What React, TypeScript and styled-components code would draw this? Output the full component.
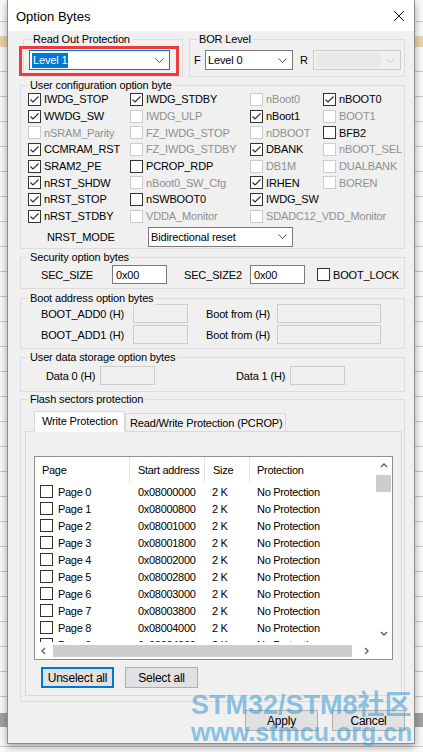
import React from 'react';
import styled, { createGlobalStyle } from 'styled-components';

type OptState = 'on' | 'off' | 'na';
type Opt = { label: string; state: OptState; span?: number };

const CONFIG_OPTIONS: (Opt | null)[] = [
  { label: 'IWDG_STOP', state: 'on' },
  { label: 'IWDG_STDBY', state: 'on' },
  { label: 'nBoot0', state: 'na' },
  { label: 'nBOOT0', state: 'on' },
  { label: 'WWDG_SW', state: 'on' },
  { label: 'IWDG_ULP', state: 'na' },
  { label: 'nBoot1', state: 'on' },
  { label: 'BOOT1', state: 'na' },
  { label: 'nSRAM_Parity', state: 'na' },
  { label: 'FZ_IWDG_STOP', state: 'na' },
  { label: 'nDBOOT', state: 'na' },
  { label: 'BFB2', state: 'off' },
  { label: 'CCMRAM_RST', state: 'on' },
  { label: 'FZ_IWDG_STDBY', state: 'na' },
  { label: 'DBANK', state: 'on' },
  { label: 'nBOOT_SEL', state: 'na' },
  { label: 'SRAM2_PE', state: 'on' },
  { label: 'PCROP_RDP', state: 'off' },
  { label: 'DB1M', state: 'na' },
  { label: 'DUALBANK', state: 'na' },
  { label: 'nRST_SHDW', state: 'on' },
  { label: 'nBoot0_SW_Cfg', state: 'na' },
  { label: 'IRHEN', state: 'on' },
  { label: 'BOREN', state: 'na' },
  { label: 'nRST_STOP', state: 'on' },
  { label: 'nSWBOOT0', state: 'off' },
  { label: 'IWDG_SW', state: 'on' },
  null,
  { label: 'nRST_STDBY', state: 'on' },
  { label: 'VDDA_Monitor', state: 'na' },
  { label: 'SDADC12_VDD_Monitor', state: 'na', span: 2 },
];

const PAGES = Array.from({ length: 10 }, (_, i) => ({
  name: `Page ${i}`,
  addr: '0x' + (0x08000000 + i * 0x800).toString(16).toUpperCase().padStart(8, '0'),
}));

function CheckBox({ state }: { state: OptState }) {
  return (
    <Box $na={state === 'na'}>
      {state === 'on' && (
        <svg width="11" height="11" viewBox="0 0 11 11">
          <polyline points="1.5,5.5 4,8 9.5,2.5" fill="none" stroke="#2b2b2b" strokeWidth="1.1" />
        </svg>
      )}
    </Box>
  );
}

function Chevron({ color = '#555' }: { color?: string }) {
  return (
    <svg width="9" height="5" viewBox="0 0 9 5">
      <polyline points="0.5,0.5 4.5,4.5 8.5,0.5" fill="none" stroke={color} strokeWidth="1" />
    </svg>
  );
}

function Arrow({ dir }: { dir: 'up' | 'down' | 'left' | 'right' }) {
  const pts = {
    up: '1,5 4,2 7,5',
    down: '1,2 4,5 7,2',
    left: '5,1 2,4 5,7',
    right: '2,1 5,4 2,7',
  }[dir];
  return (
    <svg width="8" height="8" viewBox="0 0 8 8">
      <polyline points={pts} fill="none" stroke="#606060" strokeWidth="1.4" />
    </svg>
  );
}

export default function App() {
  return (
    <Screen>
      <GlobalStyle />
      <Dialog>
        <TitleBar>
          <Title>Option Bytes</Title>
          <svg width="12" height="12" viewBox="0 0 12 12">
            <path d="M1 1 L11 11 M11 1 L1 11" stroke="#111" strokeWidth="1" />
          </svg>
        </TitleBar>

        <Body>
          <TopRow>
            <Group $h={38} $w={160} $ml={3}>
              <Caption>Read Out Protection</Caption>
              <GroupRow $pt={10} $pl={5}>
                <Combo $w={141} $focus>
                  <Picked>Level 1</Picked>
                  <Chevron />
                </Combo>
              </GroupRow>
              <Highlight />
            </Group>
            <Group $h={38} $w={216}>
              <Caption>BOR Level</Caption>
              <GroupRow $pt={10} $pl={4}>
                <Label $w={11}>F</Label>
                <Combo $w={88}>
                  <span>Level 0</span>
                  <Chevron />
                </Combo>
                <Label $w={13} $ml={7}>R</Label>
                <Combo $w={88} $disabled>
                  <DisabledWell />
                  <Chevron color="#c4c4c4" />
                </Combo>
              </GroupRow>
            </Group>
          </TopRow>

          <Group $h={164} $mt={8}>
            <Caption>User configuration option byte</Caption>
            <OptionGrid>
              {CONFIG_OPTIONS.map((opt, i) =>
                opt ? (
                  <OptionItem key={i} $na={opt.state === 'na'} $span={opt.span ?? 1}>
                    <CheckBox state={opt.state} />
                    {opt.label}
                  </OptionItem>
                ) : (
                  <span key={i} />
                ),
              )}
            </OptionGrid>
            <GroupRow $pt={2} $pl={26}>
              <Label $w={101}>NRST_MODE</Label>
              <Combo $w={145}>
                <span>Bidirectional reset</span>
                <Chevron />
              </Combo>
            </GroupRow>
          </Group>

          <Group $h={32} $mt={8}>
            <Caption>Security option bytes</Caption>
            <GroupRow $pt={7} $pl={20}>
              <Label $w={71}>SEC_SIZE</Label>
              <TextBox $w={55}>0x00</TextBox>
              <Label $w={66} $ml={17}>SEC_SIZE2</Label>
              <TextBox $w={55}>0x00</TextBox>
              <OptionItem $na={false} $span={1} $ml={12}>
                <CheckBox state="off" />
                BOOT_LOCK
              </OptionItem>
            </GroupRow>
          </Group>

          <Group $h={51} $mt={9}>
            <Caption>Boot address option bytes</Caption>
            <GroupRow $pt={5} $pl={20}>
              <Label $w={92}>BOOT_ADD0 (H)</Label>
              <TextBox $w={55} $disabled />
              <Label $w={71} $ml={18}>Boot from (H)</Label>
              <TextBox $w={104} $disabled />
            </GroupRow>
            <GroupRow $pt={2} $pl={20}>
              <Label $w={92}>BOOT_ADD1 (H)</Label>
              <TextBox $w={55} $disabled />
              <Label $w={71} $ml={18}>Boot from (H)</Label>
              <TextBox $w={104} $disabled />
            </GroupRow>
          </Group>

          <Group $h={35} $mt={8}>
            <Caption>User data storage option bytes</Caption>
            <GroupRow $pt={8} $pl={25}>
              <Label $w={54}>Data 0 (H)</Label>
              <TextBox $w={55} $disabled />
              <Label $w={54} $ml={81}>Data 1 (H)</Label>
              <TextBox $w={55} $disabled />
            </GroupRow>
          </Group>

          <Group $h={303} $mt={7}>
            <Caption>Flash sectors protection</Caption>
            <FlashInner>
              <TabStrip>
                <Tab $active>Write Protection</Tab>
                <Tab>Read/Write Protection (PCROP)</Tab>
              </TabStrip>
              <TabPanel>
                <ListFrame>
                  <ListBody>
                    <HeaderRow>
                      <HeaderCell $pl={7}>Page</HeaderCell>
                      <HeaderCell $pl={8}>Start address</HeaderCell>
                      <HeaderCell $pl={8}>Size</HeaderCell>
                      <HeaderCell $pl={7} $last>Protection</HeaderCell>
                    </HeaderRow>
                    {PAGES.map((p) => (
                      <PageRow key={p.name}>
                        <PageCell>
                          <CheckBox state="off" />
                          {p.name}
                        </PageCell>
                        <Cell $pl={8}>{p.addr}</Cell>
                        <Cell $pl={7}>2 K</Cell>
                        <Cell $pl={7}>No Protection</Cell>
                      </PageRow>
                    ))}
                  </ListBody>
                  <VScroll>
                    <ArrowCell><Arrow dir="up" /></ArrowCell>
                    <VThumb />
                    <Spacer />
                    <ArrowCell><Arrow dir="down" /></ArrowCell>
                  </VScroll>
                  <HScroll>
                    <ArrowCell><Arrow dir="left" /></ArrowCell>
                    <HThumb />
                    <Spacer />
                    <ArrowCell><Arrow dir="right" /></ArrowCell>
                  </HScroll>
                  <span />
                </ListFrame>
                <ButtonRow>
                  <WinButton $focus>Unselect all</WinButton>
                  <WinButton>Select all</WinButton>
                </ButtonRow>
              </TabPanel>
            </FlashInner>
          </Group>

          <Footer>
            <WinButton>Apply</WinButton>
            <WinButton>Cancel</WinButton>
          </Footer>
        </Body>
      </Dialog>

      <Watermark>
        <div>STM32/STM8社区</div>
        <WatermarkUrl>www.stmcu.org.cn</WatermarkUrl>
      </Watermark>
    </Screen>
  );
}

const GlobalStyle = createGlobalStyle`
  body {
    margin: 0;
    font-family: "Liberation Sans", Arial, sans-serif;
  }
`;

// spreadsheet grid showing behind the modal
const Screen = styled.div`
  position: relative;
  width: 423px;
  height: 752px;
  overflow: hidden;
  background-color: #fafafa;
  background-image:
    linear-gradient(#e7d4ad, #e7d4ad),
    linear-gradient(#a3a3a3, #a3a3a3),
    repeating-linear-gradient(to bottom, transparent 0 24px, #c9c9c9 24px 25px);
  background-size: 100% 11px, 100% 14px, 100% 100%;
  background-position: 0 36px, 0 713px, 0 -3px;
  background-repeat: no-repeat, no-repeat, repeat;
`;

const Dialog = styled.div`
  box-sizing: border-box;
  margin-left: 7px;
  width: 408px;
  height: 744px;
  border: 1px solid #8c8c8c;
  border-top: none;
  background: #f0f0f0;
  box-shadow: 0 3px 8px rgba(0, 0, 0, 0.35);
  display: flex;
  flex-direction: column;
  font-size: 11px;
  letter-spacing: -0.15px;
  color: #000;
`;

const TitleBar = styled.div`
  height: 31px;
  flex-shrink: 0;
  background: #fff;
  display: flex;
  align-items: center;
  justify-content: space-between;
  padding: 0 9px 0 8px;
`;

const Title = styled.span`
  font-size: 13px;
  letter-spacing: 0;
  margin-top: 1px;
`;

const Body = styled.div`
  display: flex;
  flex-direction: column;
  padding: 8px 9px 0 12px;
`;

const TopRow = styled.div`
  display: flex;
  gap: 6px;
`;

const Group = styled.div<{ $h: number; $w?: number; $ml?: number; $mt?: number }>`
  position: relative;
  box-sizing: border-box;
  height: ${(p) => p.$h}px;
  width: ${(p) => (p.$w ? `${p.$w}px` : 'auto')};
  margin-left: ${(p) => p.$ml ?? 0}px;
  margin-top: ${(p) => p.$mt ?? 0}px;
  border: 1px solid #dcdcdc;
`;

const Caption = styled.span`
  position: absolute;
  top: -7px;
  left: 7px;
  padding: 0 2px;
  line-height: 13px;
  background: #f0f0f0;
`;

const Highlight = styled.div`
  position: absolute;
  left: -5px;
  top: 6px;
  width: 160px;
  height: 30px;
  box-sizing: border-box;
  border: 3px solid #ec3b3f;
`;

const GroupRow = styled.div<{ $pt: number; $pl: number }>`
  display: flex;
  align-items: center;
  padding-top: ${(p) => p.$pt}px;
  padding-left: ${(p) => p.$pl}px;
`;

const Label = styled.span<{ $w: number; $ml?: number }>`
  flex-shrink: 0;
  width: ${(p) => p.$w}px;
  margin-left: ${(p) => p.$ml ?? 0}px;
  white-space: nowrap;
`;

const Combo = styled.div<{ $w: number; $focus?: boolean; $disabled?: boolean }>`
  box-sizing: border-box;
  flex-shrink: 0;
  width: ${(p) => p.$w}px;
  height: 20px;
  display: flex;
  align-items: center;
  justify-content: space-between;
  padding: 0 5px 0 2px;
  background: ${(p) => (p.$disabled ? '#f0f0f0' : '#fff')};
  border: 1px solid ${(p) => (p.$focus ? '#0078d7' : p.$disabled ? '#cccccc' : '#7a7a7a')};
`;

const Picked = styled.span`
  background: #0078d7;
  color: #fff;
  padding: 1px 1px;
  line-height: 13px;
`;

const DisabledWell = styled.div`
  width: 66px;
  height: 14px;
  background: #e9e9e9;
`;

const Box = styled.span<{ $na: boolean }>`
  box-sizing: border-box;
  flex-shrink: 0;
  width: 13px;
  height: 13px;
  display: flex;
  align-items: center;
  justify-content: center;
  background: #fff;
  border: 1px solid ${(p) => (p.$na ? '#cccccc' : '#333')};
`;

const OptionGrid = styled.div`
  display: grid;
  grid-template-columns: 102px 120px 73px 1fr;
  grid-auto-rows: 16.7px;
  padding: 5px 0 0 7px;
`;

const OptionItem = styled.label<{ $na: boolean; $span: number; $ml?: number }>`
  display: flex;
  align-items: center;
  gap: 3px;
  margin-left: ${(p) => p.$ml ?? 0}px;
  white-space: nowrap;
  grid-column: span ${(p) => p.$span};
  color: ${(p) => (p.$na ? '#8f8f8f' : '#000')};
`;

const TextBox = styled.div<{ $w: number; $disabled?: boolean }>`
  box-sizing: border-box;
  flex-shrink: 0;
  width: ${(p) => p.$w}px;
  height: 19px;
  display: flex;
  align-items: center;
  padding-left: 3px;
  background: ${(p) => (p.$disabled ? '#f0f0f0' : '#fff')};
  border: 1px solid ${(p) => (p.$disabled ? '#cccccc' : '#7a7a7a')};
`;

const FlashInner = styled.div`
  padding: 11px 2px 0 4px;
`;

const TabStrip = styled.div`
  position: relative;
  z-index: 1;
  display: flex;
  align-items: flex-end;
  height: 21px;
  margin-bottom: -1px;
  padding-left: 9px;
`;

const Tab = styled.div<{ $active?: boolean }>`
  box-sizing: border-box;
  height: ${(p) => (p.$active ? 21 : 19)}px;
  width: ${(p) => (p.$active ? 91 : 161)}px;
  display: flex;
  align-items: center;
  padding-left: ${(p) => (p.$active ? 7 : 4)}px;
  padding-bottom: ${(p) => (p.$active ? 1 : 0)}px;
  white-space: nowrap;
  background: ${(p) => (p.$active ? '#fff' : '#f0f0f0')};
  border: 1px solid #d9d9d9;
  border-bottom-color: ${(p) => (p.$active ? '#fff' : '#d9d9d9')};
`;

const TabPanel = styled.div`
  box-sizing: border-box;
  height: 265px;
  border: 1px solid #d9d9d9;
  padding: 24px 0 0 8px;
`;

const ListFrame = styled.div`
  box-sizing: border-box;
  width: 359px;
  height: 204px;
  border: 1px solid #8f8f8f;
  background: #fff;
  display: grid;
  grid-template-columns: 1fr 17px;
  grid-template-rows: 1fr 17px;
  letter-spacing: -0.3px;
`;

const ListBody = styled.div`
  overflow: hidden;
`;

const COLUMNS = '95px 75px 45px 1fr';

const HeaderRow = styled.div`
  display: grid;
  grid-template-columns: ${COLUMNS};
  height: 26px;
`;

const HeaderCell = styled.div<{ $pl: number; $last?: boolean }>`
  display: flex;
  align-items: center;
  padding-left: ${(p) => p.$pl}px;
  border-right: ${(p) => (p.$last ? 'none' : '1px solid #e5e5e5')};
  white-space: nowrap;
`;

const PageRow = styled.div`
  display: grid;
  grid-template-columns: ${COLUMNS};
  height: 17px;
  align-items: center;
`;

const PageCell = styled.div`
  display: flex;
  align-items: center;
  gap: 5px;
  padding-left: 5px;
`;

const Cell = styled.div<{ $pl: number }>`
  padding-left: ${(p) => p.$pl}px;
  white-space: nowrap;
`;

const VScroll = styled.div`
  display: flex;
  flex-direction: column;
  align-items: center;
`;

const HScroll = styled.div`
  display: flex;
  align-items: center;
`;

const ArrowCell = styled.div`
  flex-shrink: 0;
  width: 17px;
  height: 17px;
  display: flex;
  align-items: center;
  justify-content: center;
`;

const VThumb = styled.div`
  width: 15px;
  height: 17px;
  margin-top: 1px;
  background: #cdcdcd;
`;

const HThumb = styled.div`
  width: 299px;
  height: 12px;
  margin-left: 1px;
  background: #cdcdcd;
`;

const Spacer = styled.div`
  flex: 1;
`;

const ButtonRow = styled.div`
  display: flex;
  gap: 11px;
  margin-top: 7px;
  padding-left: 7px;
`;

const WinButton = styled.button<{ $focus?: boolean }>`
  box-sizing: border-box;
  width: 73px;
  height: 21px;
  padding: 0;
  font: inherit;
  font-size: 12px;
  letter-spacing: -0.2px;
  color: #000;
  background: #e1e1e1;
  border: ${(p) => (p.$focus ? '2px solid #0078d7' : '1px solid #adadad')};
`;

const Footer = styled.div`
  display: flex;
  justify-content: flex-end;
  gap: 14px;
  margin-top: 8px;
`;

const Watermark = styled.div`
  position: absolute;
  left: 191px;
  top: 692px;
  font-family: "Liberation Sans", "Noto Sans CJK SC", sans-serif;
  font-weight: 700;
  font-size: 27px;
  line-height: 27px;
  color: rgba(70, 160, 215, 0.62);
  pointer-events: none;
`;

const WatermarkUrl = styled.div`
  font-size: 25px;
  line-height: 27px;
`;
